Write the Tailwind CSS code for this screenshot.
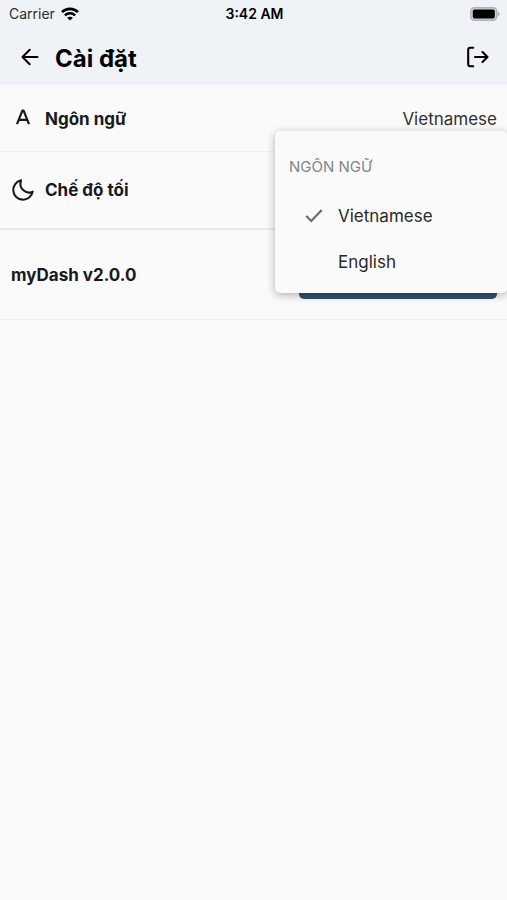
<!DOCTYPE html>
<html lang="vi">
<head>
<meta charset="utf-8">
<meta name="viewport" content="width=device-width, initial-scale=1">
<title>Cài đặt</title>
<script src="https://cdn.jsdelivr.net/npm/@tailwindcss/browser@4"></script>
</head>
<body class="min-h-screen bg-[#fafafa] font-[Inter,Roboto,sans-serif] text-[17px] leading-6 text-[#18191b]">
<header class="bg-[#eff3f8] text-black">
  <div class="grid h-7 grid-cols-3 items-center pl-[9px] pr-[7px] text-sm">
    <div class="flex items-center gap-1.5 text-[#2b2d30]">
      <span>Carrier</span>
      <svg class="h-[14px] w-[18px] text-black" viewBox="0 0 18 14" fill="none" stroke="currentColor" stroke-width="2.6" aria-hidden="true">
        <path d="M1 5.2C5.4.7 12.6.7 17 5.2"/>
        <path d="M3.9 8.4c2.9-2.8 7.3-2.8 10.2 0"/>
        <path d="M9 13.6 6.1 10.7c1.6-1.3 4.2-1.3 5.8 0Z" fill="currentColor" stroke="none"/>
      </svg>
    </div>
    <div class="text-center font-semibold whitespace-nowrap">3:42 AM</div>
    <svg class="h-[14px] w-[30px] justify-self-end" viewBox="0 0 30 14" aria-hidden="true">
      <rect x=".8" y=".8" width="26" height="12.4" rx="3.6" fill="#d0d2d5" stroke="#b0b3b6" stroke-width="1.4"/>
      <rect x="2.8" y="2.6" width="22" height="8.8" rx="1.6" fill="#000"/>
      <path d="M27.6 4.4c2.600.9 2.600 4.300 0 5.200Z" fill="#b0b3b6"/>
    </svg>
  </div>
  <div class="flex h-[57px] items-center pl-[18px] pr-[17px] pt-1">
    <button type="button" aria-label="Quay lại" class="-mt-1 mr-[13px] size-6">
      <svg class="size-6" viewBox="0 0 24 24" fill="none" stroke="currentColor" stroke-width="2" stroke-linecap="round" stroke-linejoin="round"><path d="M19.500 12H4.700M11.700 4.800 4.500 12l7.200 7.200"/></svg>
    </button>
    <h1 class="text-2xl font-bold">Cài đặt</h1>
    <button type="button" aria-label="Đăng xuất" class="-mt-1 ml-auto size-6">
      <svg class="size-6" viewBox="0 0 24 24" fill="none" stroke="currentColor" stroke-width="2.1" stroke-linecap="round" stroke-linejoin="round"><path d="M7.200 2.800H4.200Q2.200 2.800 2.200 4.800V19.200Q2.200 21.200 4.200 21.200H7.200M9 12H21.500M16.500 7 21.500 12l-5 5"/></svg>
    </button>
  </div>
</header>
<main>
  <section class="relative flex h-[67px] items-center border-b border-[#eeeeef] pl-[11px] pr-[10px] pt-0.5">
    <svg class="mr-[10px] size-6" viewBox="0 0 24 24" fill="none" stroke="currentColor" stroke-width="2.2" stroke-linejoin="round" aria-hidden="true"><path d="M6 17.200 11.400 3.700h1.200L18 17.200M7.800 12.900h8.400"/></svg>
    <h2 class="font-bold">Ngôn ngữ</h2>
    <button type="button" aria-haspopup="menu" aria-expanded="true" class="ml-auto text-[#303134]">Vietnamese</button>
    <div role="menu" aria-label="Ngôn ngữ" class="absolute right-0 top-[46px] z-10 w-[232px] rounded-[5px] bg-[#fafafa] pb-2 pt-6 text-[#29292b] shadow-[0_2px_8px_rgba(0,0,0,0.3)]">
      <div class="mb-3.5 pl-[14px] text-[15px] text-[#858585]">NGÔN NGỮ</div>
      <button type="button" role="menuitemradio" aria-checked="true" class="flex h-[46px] w-full items-center gap-3 pl-[27px]">
        <svg class="size-6" viewBox="0 0 24 24" fill="none" stroke="#6b6b6b" stroke-width="2.2" aria-hidden="true"><path d="M4.300 12l5 5L19.700 6"/></svg>
        <span>Vietnamese</span>
      </button>
      <button type="button" role="menuitemradio" aria-checked="false" class="flex h-[46px] w-full items-center pl-[63px]">English</button>
    </div>
  </section>
  <section class="flex h-[78px] items-center border-b-2 border-[#e9e9ea] pl-[11px] pr-[10px]">
    <svg class="mr-[10px] size-6" viewBox="0 0 24 24" fill="none" stroke="currentColor" stroke-width="2.100" stroke-linejoin="round" aria-hidden="true"><path d="M10 2.300A9.800 9.800 0 1 0 21.700 13.600C15.500 17 7.200 10.500 10 2.300Z"/></svg>
    <h2 class="font-bold">Chế độ tối</h2>
  </section>
  <section class="flex h-[90px] items-center justify-between border-b border-[#eeeeef] pl-[11px] pr-[10px]">
    <h2 class="font-bold">myDash v2.0.0</h2>
    <button type="button" aria-label="Cập nhật" class="h-12 w-[198px] rounded-[5px] bg-[#344f72]"></button>
  </section>
</main>
</body>
</html>
